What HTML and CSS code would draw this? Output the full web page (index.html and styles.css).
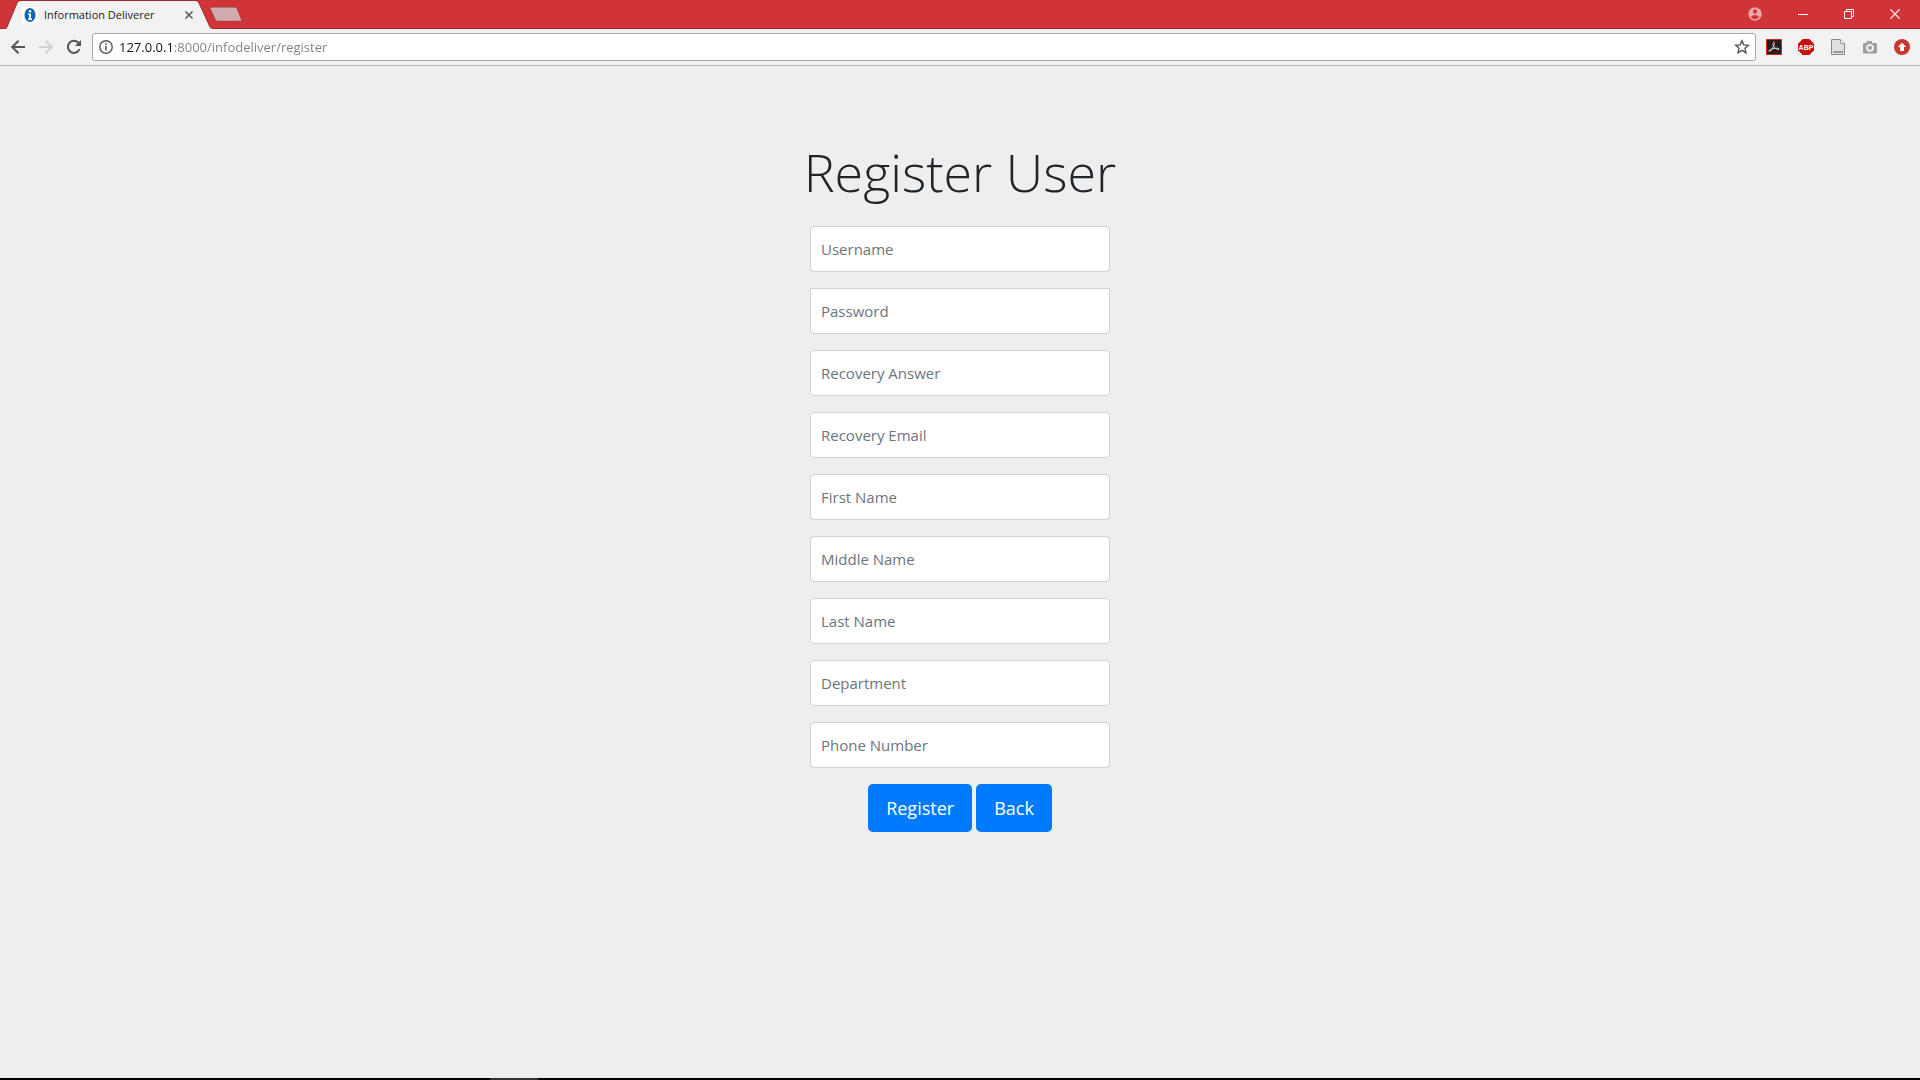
FILE: index.html
```html
<!DOCTYPE html>
<html lang="en">
<head>
<meta charset="utf-8">
<meta name="viewport" content="width=device-width, initial-scale=1">
<title>Information Deliverer</title>
<link rel="stylesheet" href="styles.css">
</head>
<body>
<header class="browser">
  <div class="tab-strip">
    <div class="tab">
      <svg class="tab-shape" width="207" height="29" viewBox="0 0 207 29" aria-hidden="true"><path d="M0 29 L1 27 L11 3 Q12 1 14 1 H190 Q192 1 193 3 L204 27 L206 29 Z" fill="#f2f2f2"/><path d="M0 28.500 L1 27 L11 3 Q12 .5 14 .5 H190 Q192 .5 193 3 L204 27 L205 28.500" fill="none" stroke="#a3282d"/></svg>
      <svg class="favicon" width="16" height="16" viewBox="0 0 16 16" aria-hidden="true"><path d="M0 0h16v16H0z" fill="#fff"/><ellipse cx="8" cy="8" rx="5.500" ry="7" fill="#0d65b3"/><circle cx="8" cy="4.200" r="1.300" fill="#fff"/><path d="M6 6.500h3v5h1V13H6v-1.500h1V8H6z" fill="#fff"/></svg>
      <span class="tab-title">Information Deliverer</span>
      <button class="tab-close" type="button" aria-label="Close tab"><svg width="10" height="10" viewBox="0 0 10 10"><path d="M1.500 1.500l7 7m0-7l-7 7" stroke="#5a5a5a" stroke-width="1.600"/></svg></button>
    </div>
    <button class="new-tab" type="button" aria-label="New tab"><svg width="34" height="17" viewBox="0 0 34 17"><path d="M2 1h24q1.500 0 2 1l4.500 11.500q.6 1.800-1 1.800H8.500q-1.500 0-2-1L1 2.500Q.5 1 2 1z" fill="#d0acaf" stroke="#a8383d"/></svg></button>
    <div class="window-controls">
      <button class="profile" type="button" aria-label="Profile"><svg width="14" height="14" viewBox="0 0 14 14"><circle cx="7" cy="7" r="6.700" fill="#eca5a8"/><circle cx="7" cy="4.600" r="2.100" fill="#d03438"/><path d="M2.800 9.800Q4.500 8 7 8t4.200 1.800Q9.600 12.200 7 12.200T2.800 9.800z" fill="#d03438"/></svg></button>
      <button class="control" type="button" aria-label="Minimize"><svg width="10" height="10" viewBox="0 0 10 10"><path d="M0 5.500h10" stroke="#fff"/></svg></button>
      <button class="control" type="button" aria-label="Restore"><svg width="10" height="10" viewBox="0 0 10 10"><path d="M.5 2.500h7v7h-7zM2.500 2.500v-2h7v7h-2" fill="none" stroke="#fff"/></svg></button>
      <button class="control" type="button" aria-label="Close"><svg width="10" height="10" viewBox="0 0 10 10"><path d="M.3.3l9.400 9.400m0-9.400L.3 9.700" stroke="#fff" stroke-width="1.200"/></svg></button>
    </div>
  </div>
  <nav class="toolbar" aria-label="Browser toolbar">
    <div class="history">
      <button class="icon-button" type="button" aria-label="Back"><svg width="16" height="16" viewBox="0 0 16 16"><path d="M15 8H2.500M8.500 1.700L2.200 8l6.300 6.300" fill="none" stroke="#555" stroke-width="2"/></svg></button>
      <button class="icon-button" type="button" aria-label="Forward"><svg width="16" height="16" viewBox="0 0 16 16"><path d="M1 8h12.500M7.500 1.700L13.800 8l-6.300 6.300" fill="none" stroke="#d2d2d2" stroke-width="2"/></svg></button>
      <button class="icon-button" type="button" aria-label="Reload"><svg width="16" height="16" viewBox="0 0 16 16"><path d="M13.500 10A6 6 0 1 1 12.300 3.800L14 5.500" fill="none" stroke="#555" stroke-width="2"/><path d="M15 1v6H9z" fill="#555"/></svg></button>
    </div>
    <div class="address">
      <svg width="14" height="14" viewBox="0 0 14 14" aria-hidden="true"><circle cx="7" cy="7" r="6.200" fill="none" stroke="#555" stroke-width="1.400"/><path d="M6.200 6h1.600v4.500H6.200zM6.200 3.300h1.600v1.600H6.200z" fill="#555"/></svg>
      <input class="url" type="text" aria-label="Address" value="127.0.0.1:8000/infodeliver/register">
      <button class="star" type="button" aria-label="Bookmark this page"><svg width="16" height="16" viewBox="0 0 16 16"><path d="M8 1.700l1.800 4.200 4.600.4-3.500 3 1.100 4.500L8 11.400l-4 2.400 1.100-4.500-3.500-3 4.600-.4z" fill="none" stroke="#555" stroke-width="1.400"/></svg></button>
    </div>
    <div class="extensions">
      <button class="icon-button" type="button" aria-label="Acrobat"><svg width="16" height="16" viewBox="0 0 16 16"><path d="M.5.500h15v15H.5z" fill="#2d1a1b" stroke="#d0281e"/><path d="M7.200 3.200q1.300-.8 1 1.600Q8 7 5.700 10.300 3.800 13 3 12.300q-.6-1 3-2.300 3-1 5.500-.8 2 .3 1.400 1.200-.9.900-3.200-1Q6.800 7.500 6.900 5" fill="none" stroke="#ddd"/></svg></button>
      <button class="icon-button" type="button" aria-label="Adblock Plus"><svg width="16" height="16" viewBox="0 0 16 16"><path d="M4.700 0h6.600L16 4.700v6.600L11.300 16H4.700L0 11.300V4.700z" fill="#c70d0d"/><text x="8" y="11" text-anchor="middle" class="abp">ABP</text></svg></button>
      <button class="icon-button" type="button" aria-label="Page tools"><svg width="16" height="16" viewBox="0 0 16 16"><path d="M1.500.500h9l4 4v11h-13z" fill="#e0e0e0" stroke="#888"/><path d="M10.500.500v4h4" fill="#f6f6f6" stroke="#999"/><path d="M3 12h10v2H3z" fill="#999"/></svg></button>
      <button class="icon-button" type="button" aria-label="Screenshot"><svg width="16" height="16" viewBox="0 0 16 16"><path d="M2 4h2.500V2H10v2h4q1 0 1 1v8.500q0 1-1 1H2q-1 0-1-1V5q0-1 1-1z" fill="#a0a0a0"/><circle cx="8" cy="8.800" r="3" fill="#a0a0a0" stroke="#f2f2f2" stroke-width="1.800"/></svg></button>
      <button class="icon-button" type="button" aria-label="Update available"><svg width="16" height="16" viewBox="0 0 16 16"><circle cx="8" cy="8" r="8" fill="#c7372b"/><path d="M8 3.700L12.300 8H10v4H6V8H3.700z" fill="#fff"/></svg></button>
    </div>
  </nav>
</header>
<main class="page">
  <form class="register">
    <h1 class="heading">Register User</h1>
    <input class="field" type="text" placeholder="Username" aria-label="Username">
    <input class="field field-password" type="password" placeholder="Password" aria-label="Password">
    <input class="field" type="text" placeholder="Recovery Answer" aria-label="Recovery Answer">
    <input class="field" type="email" placeholder="Recovery Email" aria-label="Recovery Email">
    <input class="field" type="text" placeholder="First Name" aria-label="First Name">
    <input class="field" type="text" placeholder="Middle Name" aria-label="Middle Name">
    <input class="field" type="text" placeholder="Last Name" aria-label="Last Name">
    <input class="field" type="text" placeholder="Department" aria-label="Department">
    <input class="field" type="tel" placeholder="Phone Number" aria-label="Phone Number">
    <div class="actions">
      <button class="button" type="submit">Register</button>
      <button class="button" type="button">Back</button>
    </div>
  </form>
</main>
<footer class="taskbar"><div class="taskbar-item"></div></footer>
</body>
</html>
```
FILE: styles.css
```css
* { box-sizing: border-box; }

body {
  margin: 0;
  min-height: 100vh;
  display: flex;
  flex-direction: column;
  background: #eee;
  color: #212529;
  font-family: "Open Sans", "Noto Sans", sans-serif;
}

button {
  padding: 0;
  border: 0;
  background: none;
  font: inherit;
  display: flex;
  align-items: center;
  justify-content: center;
}

svg { display: block; flex: none; }

/* Tab strip */
.tab-strip {
  display: flex;
  height: 29px;
  padding-left: 6px;
  background: #d03438;
  border-bottom: 1px solid #a3282d;
}

.tab {
  position: relative;
  display: flex;
  align-items: center;
  width: 203px;
  height: 29px;
  padding: 0 15px 0 16px;
  gap: 6px;
}

.tab-shape { position: absolute; left: 0; top: 0; }
.favicon, .tab-title, .tab-close { position: relative; }

.tab-title {
  flex: 1;
  font-size: 11px;
  line-height: 16px;
  color: #222;
  white-space: nowrap;
}

.tab-close { width: 10px; height: 10px; }
.new-tab { align-self: center; }

.window-controls {
  display: flex;
  margin-left: auto;
  padding-right: 2px;
  height: 27px;
}

.profile { width: 50px; }
.control { width: 46px; }

/* Toolbar */
.toolbar {
  display: flex;
  align-items: center;
  height: 37px;
  padding: 0 10px;
  gap: 10px;
  background: #f2f2f2;
  border-bottom: 1px solid #b6b6b6;
}

.history { display: flex; gap: 12px; }
.extensions { display: flex; gap: 16px; }
.icon-button { width: 16px; height: 16px; }

.address {
  flex: 1;
  display: flex;
  align-items: center;
  height: 28px;
  padding: 0 5px 0 6px;
  gap: 6px;
  background: #fff;
  border: 1px solid #a9a9a9;
  border-radius: 3px;
}

/* The host is dark and the rest of the address is grey */
.url {
  flex: 1;
  min-width: 0;
  height: 20px;
  padding: 0;
  border: 0;
  outline: 0;
  font: 13px/20px "Open Sans", "Noto Sans", sans-serif;
  color: #808080;
  background: linear-gradient(90deg, #111 54px, #808080 54px);
  background-clip: text;
  -webkit-background-clip: text;
  -webkit-text-fill-color: transparent;
}

.abp { font: bold 7px "Liberation Sans", sans-serif; fill: #fff; }

/* Registration page */
.page {
  flex: 1;
  display: flex;
  justify-content: center;
  align-items: flex-start;
  padding: 72px 16px 16px;
}

.register {
  width: 300px;
  display: flex;
  flex-direction: column;
  gap: 16px;
}

.heading {
  margin: 0 -8px 4px;
  text-align: center;
  font-size: 52px;
  font-weight: 300;
  line-height: 68px;
  white-space: nowrap;
}

.field {
  width: 100%;
  height: 46px;
  padding: 0 10px;
  border: 1px solid #ced4da;
  border-radius: 4px;
  background: #fff;
  color: #495057;
  font: 15px/24px "Open Sans", "Noto Sans", sans-serif;
}

.field-password { border-radius: 0 0 4px 4px; }
.field::placeholder { color: #6c757d; opacity: 1; }

.actions {
  display: flex;
  justify-content: center;
  gap: 4px;
}

.button {
  height: 48px;
  padding: 0 18px;
  border-radius: 5px;
  background: #007bff;
  color: #fff;
  font-size: 18px;
  line-height: 30px;
}

/* Top edge of the desktop taskbar */
.taskbar { height: 2px; padding-left: 490px; background: #000; }
.taskbar-item { width: 48px; height: 2px; background: #333; }
```
